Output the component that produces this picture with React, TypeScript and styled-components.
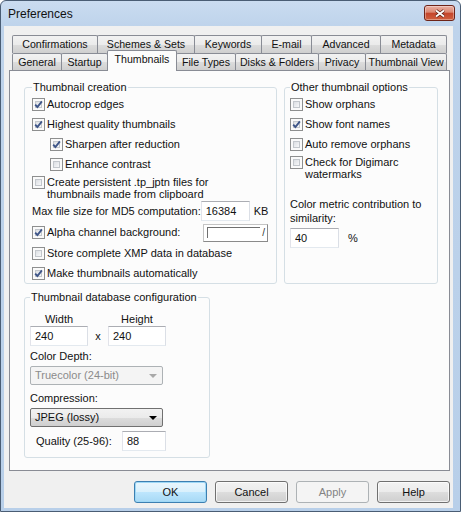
import React from "react";
import styled, { createGlobalStyle, css } from "styled-components";

const GlobalStyle = createGlobalStyle`
  html, body { margin: 0; padding: 0; background: #ffffff; }
  body {
    font-family: "Liberation Sans", Arial, sans-serif;
    font-size: 11px;
    line-height: 13px;
    color: #111;
  }
  *, *::before, *::after { box-sizing: border-box; }
`;

// 窗口外框
const Window = styled.div`
  width: 461px;
  height: 512px;
  display: flex;
  flex-direction: column;
  border: 1px solid #4a5d74;
  border-radius: 6px 6px 0 0;
  padding: 0 7px 3px 3px;
  background: linear-gradient(#cadcf0, #bed3eb 26px, #b8cfe9);
  overflow: hidden;
`;

const TitleBar = styled.div`
  flex: none;
  height: 25px;
  display: flex;
  align-items: flex-start;
  justify-content: space-between;
  padding-left: 4px;
`;

const Title = styled.span`
  margin-top: 6px;
  font-size: 12px;
  line-height: 14px;
`;

const CloseButton = styled.div`
  width: 31px;
  height: 16px;
  margin: 4px -2px 0 0;
  display: flex;
  align-items: center;
  justify-content: center;
  border: 1px solid #6e2418;
  border-radius: 3px;
  background: linear-gradient(#eab0a3 0%, #db8872 45%, #c4452b 50%, #d0603f 100%);
  box-shadow: inset 0 0 0 1px rgba(255, 255, 255, 0.35);
`;

const Client = styled.div`
  flex: 1;
  display: flex;
  flex-direction: column;
  background: #f0f0f0;
  padding: 9px 3px 5px 5px;
`;

// 标签页
const TabStrip = styled.div`
  display: flex;
  flex-direction: column;
  padding: 0 3px;
`;

const TabRow = styled.div<{ $h: number }>`
  display: flex;
  align-items: flex-end;
  height: ${(p) => p.$h}px;
`;

const Tab = styled.div<{ $w: number; $active?: boolean }>`
  position: relative;
  flex: none;
  width: ${(p) => p.$w}px;
  height: 100%;
  border: 1px solid #898c95;
  border-bottom: none;
  border-radius: 2px 2px 0 0;
  background: linear-gradient(#f2f2f2 0%, #ebebeb 50%, #dddddd 50%, #cfcfcf 100%);
  text-align: center;
  font-size: 10.6px;
  line-height: 16px;
  white-space: nowrap;
  overflow: hidden;
  & + & {
    margin-left: -1px;
  }
  ${(p) =>
    p.$active &&
    css`
      z-index: 2;
      height: 21px;
      margin-bottom: -1px;
      background: #fcfcfc;
      line-height: 16px;
    `}
`;

const Panel = styled.div`
  display: flex;
  flex-direction: column;
  gap: 7px;
  background: #fcfcfc;
  border: 1px solid #898c95;
  padding: 10px 11px 12px 14px;
`;

const TopRow = styled.div`
  display: flex;
  gap: 7px;
  align-items: stretch;
`;

// 分组框
const Group = styled.fieldset<{ $w: number; $pad: string }>`
  margin: 0;
  min-width: 0;
  width: ${(p) => p.$w}px;
  padding: ${(p) => p.$pad};
  border: 1px solid #d5dfe5;
  border-radius: 3px;
`;

const Legend = styled.legend`
  padding: 0 1px;
  line-height: 13px;
`;

const CheckRow = styled.div<{ $indent?: boolean; $tall?: boolean }>`
  display: flex;
  align-items: center;
  height: 20px;
  padding-left: ${(p) => (p.$indent ? 18 : 0)}px;
  white-space: nowrap;
  ${(p) =>
    p.$tall &&
    css`
      align-items: flex-start;
      height: 26px;
      padding-top: 2px;
      line-height: 12px;
    `}
`;

const Box = styled.span`
  position: relative;
  flex: none;
  width: 13px;
  height: 13px;
  margin-right: 2px;
  border: 1px solid #8e8f8f;
  background: #fafafa;
  &::before {
    content: "";
    position: absolute;
    inset: 2px;
    border: 1px solid #c3c7cc;
    background: linear-gradient(135deg, #dcdfe3, #f7f8f9);
  }
  svg {
    position: absolute;
    left: 0;
    top: 0;
  }
`;

const FieldRow = styled.div<{ $h: number }>`
  display: flex;
  align-items: center;
  height: ${(p) => p.$h}px;
  white-space: nowrap;
`;

const Trailing = styled.div`
  margin-left: auto;
  display: flex;
  align-items: center;
  gap: 4px;
`;

const TextBox = styled.input<{ $w: number }>`
  width: ${(p) => p.$w}px;
  height: 20px;
  padding: 0 4px;
  border: 1px solid;
  border-color: #abadb3 #dbdfe6 #e3e9ef #e2e3ea;
  background: #fff;
  font: inherit;
  color: #111;
  outline: none;
`;

const Swatch = styled.div`
  margin-left: auto;
  width: 65px;
  height: 18px;
  display: flex;
  align-items: center;
  gap: 2px;
  padding: 0 2px 0 3px;
  border: 1px solid;
  border-color: #c4c4c4 #8a8a8a #8a8a8a #c4c4c4;
  background: #fff;
`;

const SwatchWell = styled.div`
  flex: 1;
  height: 11px;
  border-top: 1px solid #707070;
  border-left: 1px solid #707070;
`;

const SwatchSlash = styled.span`
  font-size: 10px;
  line-height: 10px;
  color: #333;
`;

const Caption = styled.div<{ $gap: number }>`
  margin-top: ${(p) => p.$gap}px;
  line-height: 14px;
`;

const PercentRow = styled.div`
  display: flex;
  align-items: center;
  gap: 9px;
  margin-top: 3px;
`;

const SizeGrid = styled.div`
  display: grid;
  grid-template-columns: 58px 20px 58px;
  align-items: center;
  margin-top: 8px;
  line-height: 14px;
  text-align: center;
`;

const DropDown = styled.div<{ $disabled?: boolean }>`
  width: 133px;
  height: 19px;
  margin-top: 3px;
  display: flex;
  align-items: center;
  justify-content: space-between;
  padding: 0 5px 0 4px;
  border-radius: 2px;
  ${(p) =>
    p.$disabled
      ? css`
          border: 1px solid #adb2b5;
          background: #f4f4f4;
          color: #8b8b8b;
        `
      : css`
          border: 1px solid #707070;
          background: linear-gradient(#f2f2f2 0%, #ebebeb 50%, #dddddd 50%, #cfcfcf 100%);
          color: #111;
        `}
`;

const Arrow = styled.span<{ $disabled?: boolean }>`
  width: 0;
  height: 0;
  border-left: 4px solid transparent;
  border-right: 4px solid transparent;
  border-top: 4px solid ${(p) => (p.$disabled ? "#a8a8a8" : "#000")};
`;

const QualityRow = styled.div`
  display: grid;
  grid-template-columns: 86px 44px;
  align-items: center;
  margin-top: 4px;
  padding-left: 6px;
`;

// 底部按钮
const ButtonRow = styled.div`
  display: flex;
  justify-content: flex-end;
  gap: 8px;
  margin-top: 10px;
`;

const Button = styled.button<{ $kind?: "default" | "disabled" }>`
  width: 73px;
  height: 22px;
  padding: 0;
  font: inherit;
  color: #111;
  border: 1px solid #707070;
  border-radius: 3px;
  background: linear-gradient(#f2f2f2 0%, #ebebeb 50%, #dddddd 50%, #cfcfcf 100%);
  box-shadow: inset 0 0 0 1px rgba(255, 255, 255, 0.7);
  ${(p) =>
    p.$kind === "default" &&
    css`
      border-color: #3c7fb1;
      background: linear-gradient(#eaf6fd 0%, #d9f0fc 50%, #bee6fd 50%, #a7d9f5 100%);
      box-shadow: inset 0 0 0 1px #9ed8f6;
    `}
  ${(p) =>
    p.$kind === "disabled" &&
    css`
      border-color: #adb2b5;
      background: #f4f4f4;
      color: #838383;
      box-shadow: none;
    `}
`;

const Check: React.FC<{ on?: boolean }> = ({ on }) => (
  <Box>
    {on && (
      <svg width="11" height="11" viewBox="0 0 11 11">
        <path d="M2.2 5.6 L4.4 8 L8.9 2.4" fill="none" stroke="#3f5689" strokeWidth="1.9" />
      </svg>
    )}
  </Box>
);

const rowOne = [
  ["Confirmations", 86],
  ["Schemes & Sets", 98],
  ["Keywords", 68],
  ["E-mail", 51],
  ["Advanced", 70],
  ["Metadata", 67],
] as const;

const rowTwo = [
  ["General", 50],
  ["Startup", 47],
  ["Thumbnails", 70],
  ["File Types", 60],
  ["Disks & Folders", 84],
  ["Privacy", 48],
  ["Thumbnail View", 82],
] as const;

const App: React.FC = () => {
  return (
    <Window>
      <GlobalStyle />
      <TitleBar>
        <Title>Preferences</Title>
        <CloseButton>
          <svg width="12" height="9" viewBox="0 0 12 9">
            <path d="M2 1.5 L10 7.5 M10 1.5 L2 7.5" stroke="#5c1f14" strokeWidth="3.4" />
            <path d="M2 1.5 L10 7.5 M10 1.5 L2 7.5" stroke="#ffffff" strokeWidth="1.8" />
          </svg>
        </CloseButton>
      </TitleBar>
      <Client>
        <TabStrip>
          <TabRow $h={18}>
            {rowOne.map(([name, w]) => (
              <Tab key={name} $w={w}>{name}</Tab>
            ))}
          </TabRow>
          <TabRow $h={17}>
            {rowTwo.map(([name, w]) => (
              <Tab key={name} $w={w} $active={name === "Thumbnails"}>{name}</Tab>
            ))}
          </TabRow>
        </TabStrip>
        <Panel>
          <TopRow>
            <Group $w={253} $pad="0 8px 0 7px">
              <Legend>Thumbnail creation</Legend>
              <CheckRow><Check on />Autocrop edges</CheckRow>
              <CheckRow><Check on />Highest quality thumbnails</CheckRow>
              <CheckRow $indent><Check on />Sharpen after reduction</CheckRow>
              <CheckRow $indent><Check />Enhance contrast</CheckRow>
              <CheckRow $tall>
                <Check />
                <span>Create persistent .tp_jptn files for<br />thumbnails made from clipboard</span>
              </CheckRow>
              <FieldRow $h={22}>
                Max file size for MD5 computation:
                <Trailing>
                  <TextBox $w={49} defaultValue="16384" />
                  KB
                </Trailing>
              </FieldRow>
              <FieldRow $h={21}>
                <Check on />Alpha channel background:
                <Swatch>
                  <SwatchWell />
                  <SwatchSlash>/</SwatchSlash>
                </Swatch>
              </FieldRow>
              <CheckRow><Check />Store complete XMP data in database</CheckRow>
              <CheckRow><Check on />Make thumbnails automatically</CheckRow>
            </Group>
            <Group $w={154} $pad="0 5px 0 5px">
              <Legend>Other thumbnail options</Legend>
              <CheckRow><Check />Show orphans</CheckRow>
              <CheckRow><Check on />Show font names</CheckRow>
              <CheckRow><Check />Auto remove orphans</CheckRow>
              <CheckRow $tall>
                <Check />
                <span>Check for Digimarc<br />watermarks</span>
              </CheckRow>
              <Caption $gap={17}>Color metric contribution to<br />similarity:</Caption>
              <PercentRow>
                <TextBox $w={49} defaultValue="40" />
                %
              </PercentRow>
            </Group>
          </TopRow>
          <Group $w={186} $pad="0 5px 6px 5px">
            <Legend>Thumbnail database configuration</Legend>
            <SizeGrid>
              <span>Width</span>
              <span />
              <span>Height</span>
              <TextBox $w={58} defaultValue="240" />
              <span>x</span>
              <TextBox $w={58} defaultValue="240" />
            </SizeGrid>
            <Caption $gap={3}>Color Depth:</Caption>
            <DropDown $disabled>
              Truecolor (24-bit)
              <Arrow $disabled />
            </DropDown>
            <Caption $gap={6}>Compression:</Caption>
            <DropDown>
              JPEG (lossy)
              <Arrow />
            </DropDown>
            <QualityRow>
              <span>Quality (25-96):</span>
              <TextBox $w={44} defaultValue="88" />
            </QualityRow>
          </Group>
        </Panel>
        <ButtonRow>
          <Button $kind="default">OK</Button>
          <Button>Cancel</Button>
          <Button $kind="disabled">Apply</Button>
          <Button>Help</Button>
        </ButtonRow>
      </Client>
    </Window>
  );
};

export default App;
